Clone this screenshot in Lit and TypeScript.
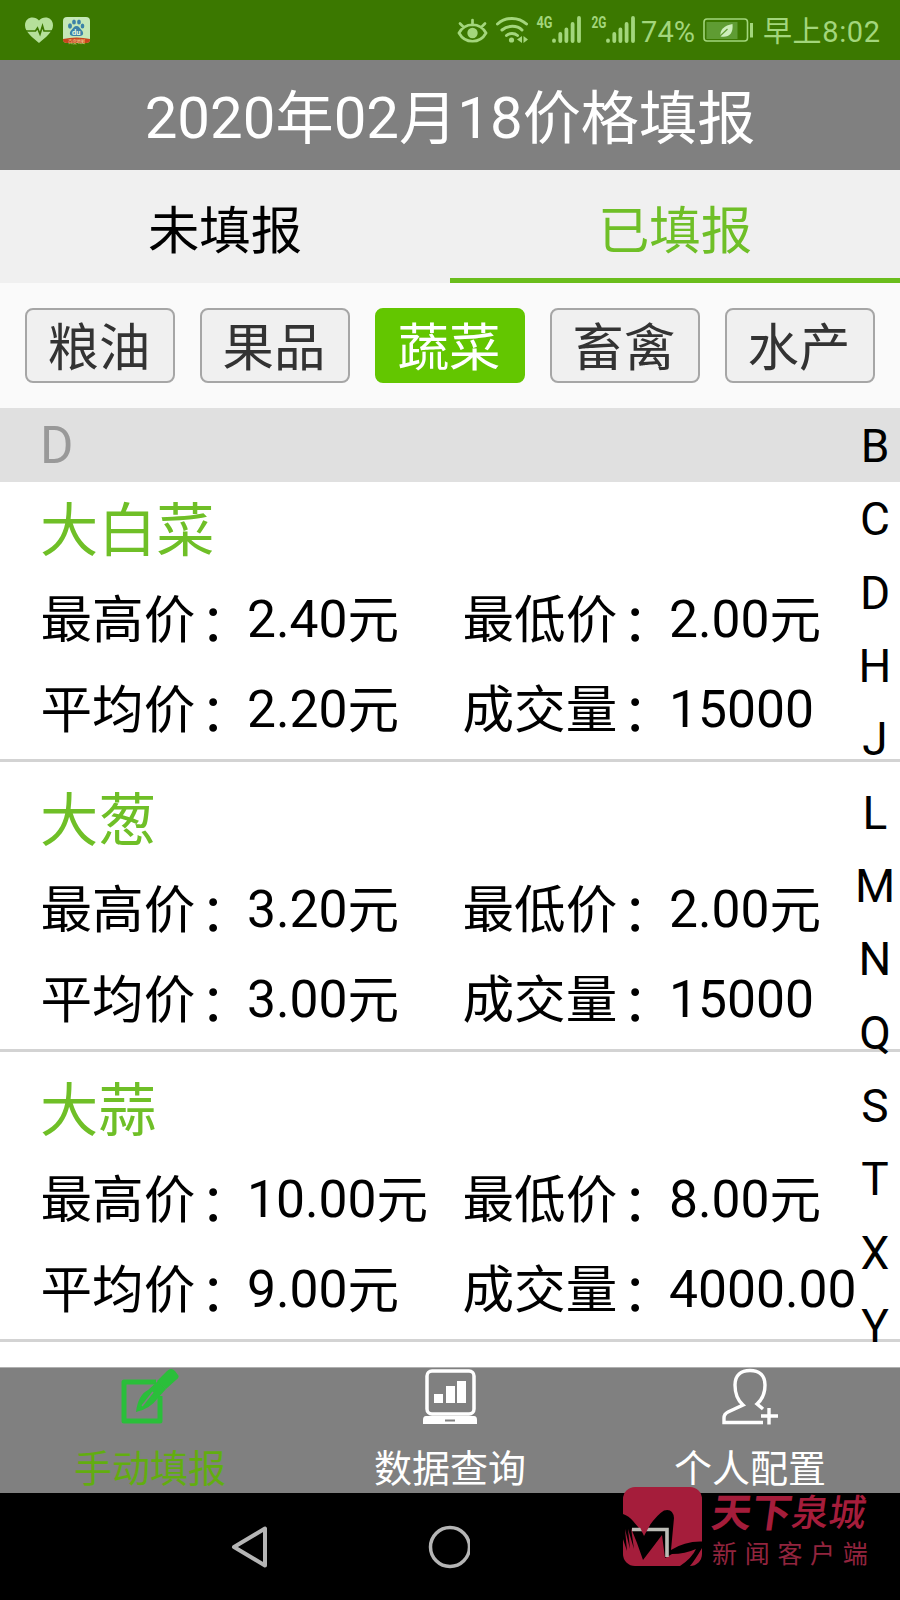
import { LitElement, html, css, svg } from "lit";
import { customElement, state } from "lit/decorators.js";

interface Item { name: string; high: string; low: string; avg: string; volume: string; unit: string }

const ITEMS: Item[] = [
  { name: "大白菜", high: "2.40", low: "2.00", avg: "2.20", volume: "15000", unit: "元" },
  { name: "大葱", high: "3.20", low: "2.00", avg: "3.00", volume: "15000", unit: "元" },
  { name: "大蒜", high: "10.00", low: "8.00", avg: "9.00", volume: "4000.00", unit: "元" },
];
const CATEGORIES = ["粮油", "果品", "蔬菜", "畜禽", "水产"];
const LETTERS = ["B", "C", "D", "H", "J", "L", "M", "N", "Q", "S", "T", "X", "Y"];

@customElement("status-bar")
class StatusBar extends LitElement {
  static styles = css`
    :host { display: block; height: 60px; background: #3b7800; }
    svg { display: block; }
  `;
  bars(x: number) {
    return svg`<g stroke="#a3d67c" stroke-width="3.8" stroke-linecap="round">
      <path d="M${x} 40.5v.4M${x + 6.3} 34v7M${x + 12.4} 29.5v11.5M${x + 18.6} 24v17M${x + 25} 18v23"/></g>`;
  }
  render() {
    return html`<svg width="900" height="60" viewBox="0 0 900 60" fill="none" font-family="Roboto, 'Noto Sans CJK SC', sans-serif">
      <path d="M39 43C33 38 25 32 25 25.500c0-9 10-10 14-5 4-5 14-4 14 5C53 32 45 38 39 43z" fill="#b5e09a"/>
      <path d="M25 31h10.500l2-3 2.500 6 2.500-8 1.500 5h9" stroke="#3b7800" stroke-width="1.700"/>
      <rect x="63" y="17" width="27" height="26" rx="4" fill="#c5e8b8"/>
      <path d="M63 39q13.500-3 27 0v1q0 3-4 3H67q-4 0-4-3z" fill="#c8451c"/>
      <text x="68" y="42.500" font-size="4.500" fill="#f5d9a0" textLength="17">百度地图</text>
      <g fill="#3b82a8"><ellipse cx="70" cy="26" rx="2" ry="2.700"/><ellipse cx="74" cy="22" rx="1.900" ry="2.600"/><ellipse cx="79" cy="22" rx="1.900" ry="2.600"/><ellipse cx="82.500" cy="26" rx="1.800" ry="2.500"/><path d="M76.500 26c2.500 0 3 2 5 4 3 3 1.500 6-1.500 6h-7c-3 0-4.500-3-1.500-6 2-2 2.500-4 5-4z"/></g>
      <text x="72" y="35" font-size="7.500" font-weight="700" fill="#e8fae0">du</text>
      <g stroke="#a3d67c" stroke-width="2.700" stroke-linecap="round">
        <path d="M459 33c6-11 21-11 27 0-6 11-21 11-27 0zM472.500 20v5M460 23.500l3.500 3.500M485 23.500l-3.500 3.500"/>
        <circle cx="472.500" cy="33" r="5.200" fill="#a3d67c" stroke="none"/>
        <path d="M497.500 24c8-7.500 21-7.500 29 0M502 30c6-5 15-5 20 0M506.500 35.500c3-2.700 8-2.700 11 0" stroke-width="3"/>
      </g>
      <circle cx="511.500" cy="40" r="2.600" fill="#a3d67c"/>
      <path d="M517 39.500l5-3.500v7zM528 39.500l-4.500-3.500v7z" fill="#a3d67c"/>
      <text x="536.500" y="27.500" font-size="16" font-weight="700" fill="#a3d67c" textLength="16" lengthAdjust="spacingAndGlyphs">4G</text>
      ${this.bars(554)}
      <text x="591.500" y="27.500" font-size="16" font-weight="700" fill="#a3d67c" textLength="15" lengthAdjust="spacingAndGlyphs">2G</text>
      ${this.bars(608)}
      <text x="641" y="41.500" font-size="29" fill="#a3d67c" textLength="54">74%</text>
      <rect x="704" y="19" width="43.500" height="22" rx="3" stroke="#a3d67c" stroke-width="1.600"/>
      <rect x="706.500" y="22" width="31" height="17" fill="#5f9c33"/>
      <path d="M751.500 23v14.500" stroke="#a3d67c" stroke-width="3"/>
      <path d="M732.500 24c1 10-4 14-12 12.500-1-7 4-11 12-12.500z" fill="#cdeebb"/>
      <path d="M718.500 37.500l9-8.500" stroke="#5f9c33" stroke-width="1.200"/>
      <text x="763" y="41.500" font-size="29" fill="#a3d67c" textLength="117">早上8:02</text>
    </svg>`;
  }
}

@customElement("price-row")
class PriceRow extends LitElement {
  static properties = { item: { attribute: false } };
  declare item: Item;
  static styles = css`
    :host { display: block; box-sizing: border-box; height: 290px; padding: 14px 0 0 40px; border-bottom: 3px solid #d3d3d3; background: #fff; }
    .name { height: 90px; line-height: 90px; font-size: 58.2px; color: #6fbf27; }
    .grid { display: grid; grid-template-columns: 422px 1fr; grid-auto-rows: 90px; padding-left: 0.5px; line-height: 90px; font-size: 51.6px; color: #000; white-space: nowrap; }
    .colon { display: inline-block; box-sizing: border-box; width: 1em; padding-left: 5px; line-height: 1; vertical-align: -3px; }
    .num { line-height: 1; vertical-align: 1px; }
  `;
  field(label: string, value: string, unit = "") {
    return html`<div>${label}<span class="colon">：</span><span class="num">${value}</span>${unit}</div>`;
  }
  render() {
    const i = this.item;
    return html`<div class="name">${i.name}</div>
      <div class="grid">
        ${this.field("最高价", i.high, i.unit)}${this.field("最低价", i.low, i.unit)}
        ${this.field("平均价", i.avg, i.unit)}${this.field("成交量", i.volume)}
      </div>`;
  }
}

@customElement("brand-mark")
class BrandMark extends LitElement {
  static styles = css`
    :host { display: flex; gap: 10px; color: #a51d3b; }
    .words { width: 162px; }
    .script { display: flex; align-items: center; height: 50px; padding-top: 2px; line-height: 46px; font-size: 40px; font-weight: 700; white-space: nowrap; transform: skewX(-8deg); }
    .light { font-weight: 500; font-size: 37px; }
    .sub { line-height: 32px; font-size: 25px; letter-spacing: 7.700px; white-space: nowrap; color: #92243e; }
    svg, .words { display: block; }
  `;
  render() {
    return html`<svg width="79" height="80" viewBox="0 0 79 80">
        <rect width="79" height="79" rx="12" fill="#a51d3b"/>
        <path d="M0 27Q6 29 10 34L21 47Q32 29 41 23.500 50 21 51 31L48 63Q62 54 79 54.500V61Q72 73 67 79H57Q69 71 73 62 62 67 49 67L42 71 39 48Q30 60 20 73L14 56 8 41 11 62 5 42 7 62 2 42 4 64 0 52z" fill="#000"/>
        <path d="M9 42.500H44V70" fill="none" stroke="#bcbcb6" stroke-width="3.600"/>
        <path d="M16 38L21 49 27 38z" fill="#a51d3b"/>
      </svg>
      <div class="words"><div class="script"><span>天</span><span>下</span><span class="light">泉</span><span class="light">城</span></div><div class="sub">新闻客户端</div></div>`;
  }
}

@customElement("app-root")
class AppRoot extends LitElement {
  @state() private category = "蔬菜";
  static styles = css`
    :host { display: flex; flex-direction: column; position: relative; width: 900px; height: 1600px; overflow: hidden; background: #fff; font-family: Roboto, "Noto Sans CJK SC", sans-serif; }
    .title { height: 110px; line-height: 118px; background: #808080; color: #fff; text-align: center; font-size: 58.2px; }
    .num { line-height: 1; vertical-align: 1px; }
    .tabs { display: grid; grid-template-columns: 1fr 1fr; height: 113px; background: #f0f0f0; font-size: 51.4px; line-height: 124px; text-align: center; color: #000; }
    .tab { box-sizing: border-box; height: 113px; }
    .tab.on { color: #6fbf27; border-bottom: 5px solid #6abd1c; }
    .chips { display: grid; grid-template-columns: repeat(5, 150px); gap: 25px; padding: 25px; height: 75px; background: #fafafa; }
    .chip { box-sizing: border-box; height: 75px; border: 2px solid #a6a6a6; border-radius: 8px; background: #f0f0f0; color: #333; font-size: 51.4px; line-height: 78px; text-align: center; text-indent: -2px; white-space: nowrap; cursor: pointer; }
    .chip.on { background: #63c600; border-color: #63c600; color: #fff; }
    .section { height: 74px; line-height: 76px; padding-left: 40px; background: #e0e0e0; color: #999; font-size: 51px; }
    .list { height: 885px; overflow: hidden; }
    .list price-row:first-child { margin-top: -10px; }
    .index { position: absolute; right: 0; top: 410px; width: 50px; color: #000; font-size: 46px; line-height: 73.35px; text-align: center; }
    .nav { display: grid; grid-template-columns: repeat(3, 1fr); height: 125px; border-top: 1px solid #b0b0b0; background: #808080; color: #fff; font-size: 38px; }
    .item { display: flex; flex-direction: column; align-items: center; }
    .item svg { display: block; height: 58px; width: 60px; }
    .item span { line-height: 87px; }
    .item.on { color: #62ad10; }
    .system { height: 107px; background: #000; display: flex; align-items: center; padding-left: 230px; gap: 156px; }
    brand-mark { position: absolute; left: 623px; top: 1487px; }
  `;
  render() {
    return html`
      <status-bar></status-bar>
      <div class="title"><span class="num">2020</span>年<span class="num">02</span>月<span class="num">18</span>价格填报</div>
      <div class="tabs"><div class="tab">未填报</div><div class="tab on">已填报</div></div>
      <div class="chips">${CATEGORIES.map(c => html`<div role="button" class="chip ${c === this.category ? "on" : ""}" @click=${() => (this.category = c)}>${c}</div>`)}</div>
      <div class="section">D</div>
      <div class="list">${ITEMS.map(i => html`<price-row .item=${i}></price-row>`)}</div>
      <div class="index">${LETTERS.map(l => html`<div>${l}</div>`)}</div>
      <div class="nav">
        <div class="item on">
          <svg viewBox="0 0 60 58" fill="none"><path d="M36 14H4V53H40V28" stroke="#2abf3a" stroke-width="5" stroke-linejoin="round"/><path d="M16 44Q18 27 28 22L38 13 46 21 38 30Q30 41 16 44z" fill="#2abf3a"/><path d="M37 13L47 3Q51-1 55 3L58 7Q60 9 56 12L46 21z" fill="#2abf3a"/><path d="M22 38L33 24" stroke="#808080" stroke-width="1.500"/></svg>
          <span>手动填报</span></div>
        <div class="item">
          <svg viewBox="0 0 60 58"><rect x="7" y="3" width="47" height="43" rx="5" fill="none" stroke="#fff" stroke-width="3.500"/><path d="M14 26h9v9h-9zM26 18h9v17h-9zM37 13h9v22h-9zM6 48h48q3 0 3 4v4H3v-4q0-4 3-4z" fill="#fff"/><path d="M25 52.500h10" stroke="#808080" stroke-width="2"/></svg>
          <span>数据查询</span></div>
        <div class="item">
          <svg viewBox="0 0 60 58" fill="none" stroke="#fff" stroke-width="3.400"><path d="M43 41L37 36Q45 29 45 17C45 7 39 2.500 30 2.500S15 7 15 17Q15 30 23 37L8 44Q4 46 4 50V54.500H43"/><path d="M49 40v16.500M41 48h17"/></svg>
          <span>个人配置</span></div>
      </div>
      <div class="system">
        <svg width="40" height="44" viewBox="0 0 40 44" fill="none" stroke="#b5b5b5" stroke-width="4" stroke-linejoin="round"><path d="M4 22L35 3.500V40.500z"/></svg>
        <svg width="44" height="44" viewBox="0 0 44 44" fill="none" stroke="#b5b5b5" stroke-width="3.500"><circle cx="24" cy="22" r="19.500"/></svg>
      </div>
      <brand-mark></brand-mark>`;
  }
}
